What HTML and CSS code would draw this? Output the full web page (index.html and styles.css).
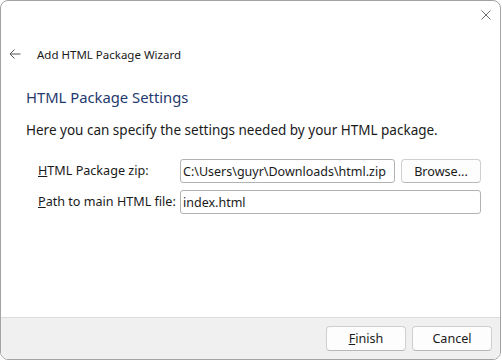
FILE: index.html
```html
<!DOCTYPE html>
<html>
<head>
  <title>Add HTML Package Wizard</title>
  <link rel="stylesheet" href="styles.css">
</head>
<body>
  <div class="window">
    <div class="titlebar">
      <svg class="close-icon" width="10" height="10" viewBox="0 0 10 10">
        <path d="M0.5 0.5 L9.5 9.5 M9.5 0.5 L0.5 9.5" stroke="#6b6b6b" stroke-width="1" fill="none"/>
      </svg>
    </div>
    <div class="nav">
      <svg class="back-icon" width="12" height="10" viewBox="0 0 12 10">
        <path d="M11.5 5 H1 M5.5 0.5 L1 5 L5.5 9.5" stroke="#555" stroke-width="1" fill="none"/>
      </svg>
      <span class="wizard-title">Add HTML Package Wizard</span>
    </div>

    <div class="content">
      <h2 class="page-title">HTML Package Settings</h2>
      <p class="page-desc">Here you can specify the settings needed by your HTML package.</p>

      <div class="form">
        <label class="field-label"><u>H</u>TML Package zip:</label>
        <div class="field-row">
          <input type="text" class="text-field" value="C:\Users\guyr\Downloads\html.zip">
          <button class="btn browse-btn">Browse...</button>
        </div>
        <label class="field-label"><u>P</u>ath to main HTML file:</label>
        <input type="text" class="text-field" value="index.html">
      </div>
    </div>

    <div class="footer">
      <button class="btn footer-btn"><u>F</u>inish</button>
      <button class="btn footer-btn">Cancel</button>
    </div>
  </div>
</body>
</html>
```
FILE: styles.css
```css
body {
  margin: 0;
  font-family: "Noto Sans", "Open Sans", sans-serif;
  font-size: 12.6px;
  color: #1a1a1a;
  background: #fff;
}
.window {
  width: 501px;
  height: 360px;
  box-sizing: border-box;
  border: 1px solid #a3a3a3;
  border-radius: 8px;
  overflow: hidden;
  display: flex;
  flex-direction: column;
  background: #fff;
}
.titlebar {
  height: 43px;
  display: flex;
  justify-content: flex-end;
  align-items: flex-start;
  padding: 9px 9px 0 0;
  box-sizing: border-box;
}
.nav {
  display: flex;
  align-items: center;
  height: 20px;
  padding-left: 8px;
}
.back-icon {
  margin-right: 16px;
}
.wizard-title {
  font-size: 11.5px;
  color: #1a1a1a;
}
.content {
  flex: 1;
  padding: 0 19px 0 25px;
}
.page-title {
  margin: 23px 0 0 0;
  font-size: 14.8px;
  font-weight: normal;
  color: #1f3a6e;
  line-height: 20px;
}
.page-desc {
  margin: 15px 0 0 0;
  font-size: 13.5px;
  line-height: 16px;
  white-space: nowrap;
}
.form {
  display: grid;
  grid-template-columns: 142px 1fr;
  row-gap: 7px;
  align-items: center;
  margin: 21px 0 0 12px;
}
.field-label {
  line-height: 16px;
  white-space: nowrap;
}
.field-row {
  display: flex;
  gap: 6px;
}
.text-field {
  flex: 1;
  height: 24px;
  box-sizing: border-box;
  border: 1px solid #b3b3b3;
  border-radius: 3px;
  padding: 0 2px;
  font-family: inherit;
  font-size: 12.5px;
  color: #1a1a1a;
  min-width: 0;
}
.btn {
  height: 24px;
  box-sizing: border-box;
  border: 1px solid #cfcfcf;
  border-bottom-color: #b8b8b8;
  border-radius: 4px;
  background: #fdfdfd;
  font-family: inherit;
  font-size: 12.6px;
  color: #1a1a1a;
  padding: 0;
}
.browse-btn {
  width: 80px;
}
.footer {
  height: 42px;
  box-sizing: border-box;
  border-top: 1px solid #dcdcdc;
  background: #f0f0f0;
  display: flex;
  justify-content: flex-end;
  align-items: center;
  gap: 6px;
  padding: 0 8px 1px 0;
}
.footer-btn {
  width: 80px;
  height: 25px;
}
```
